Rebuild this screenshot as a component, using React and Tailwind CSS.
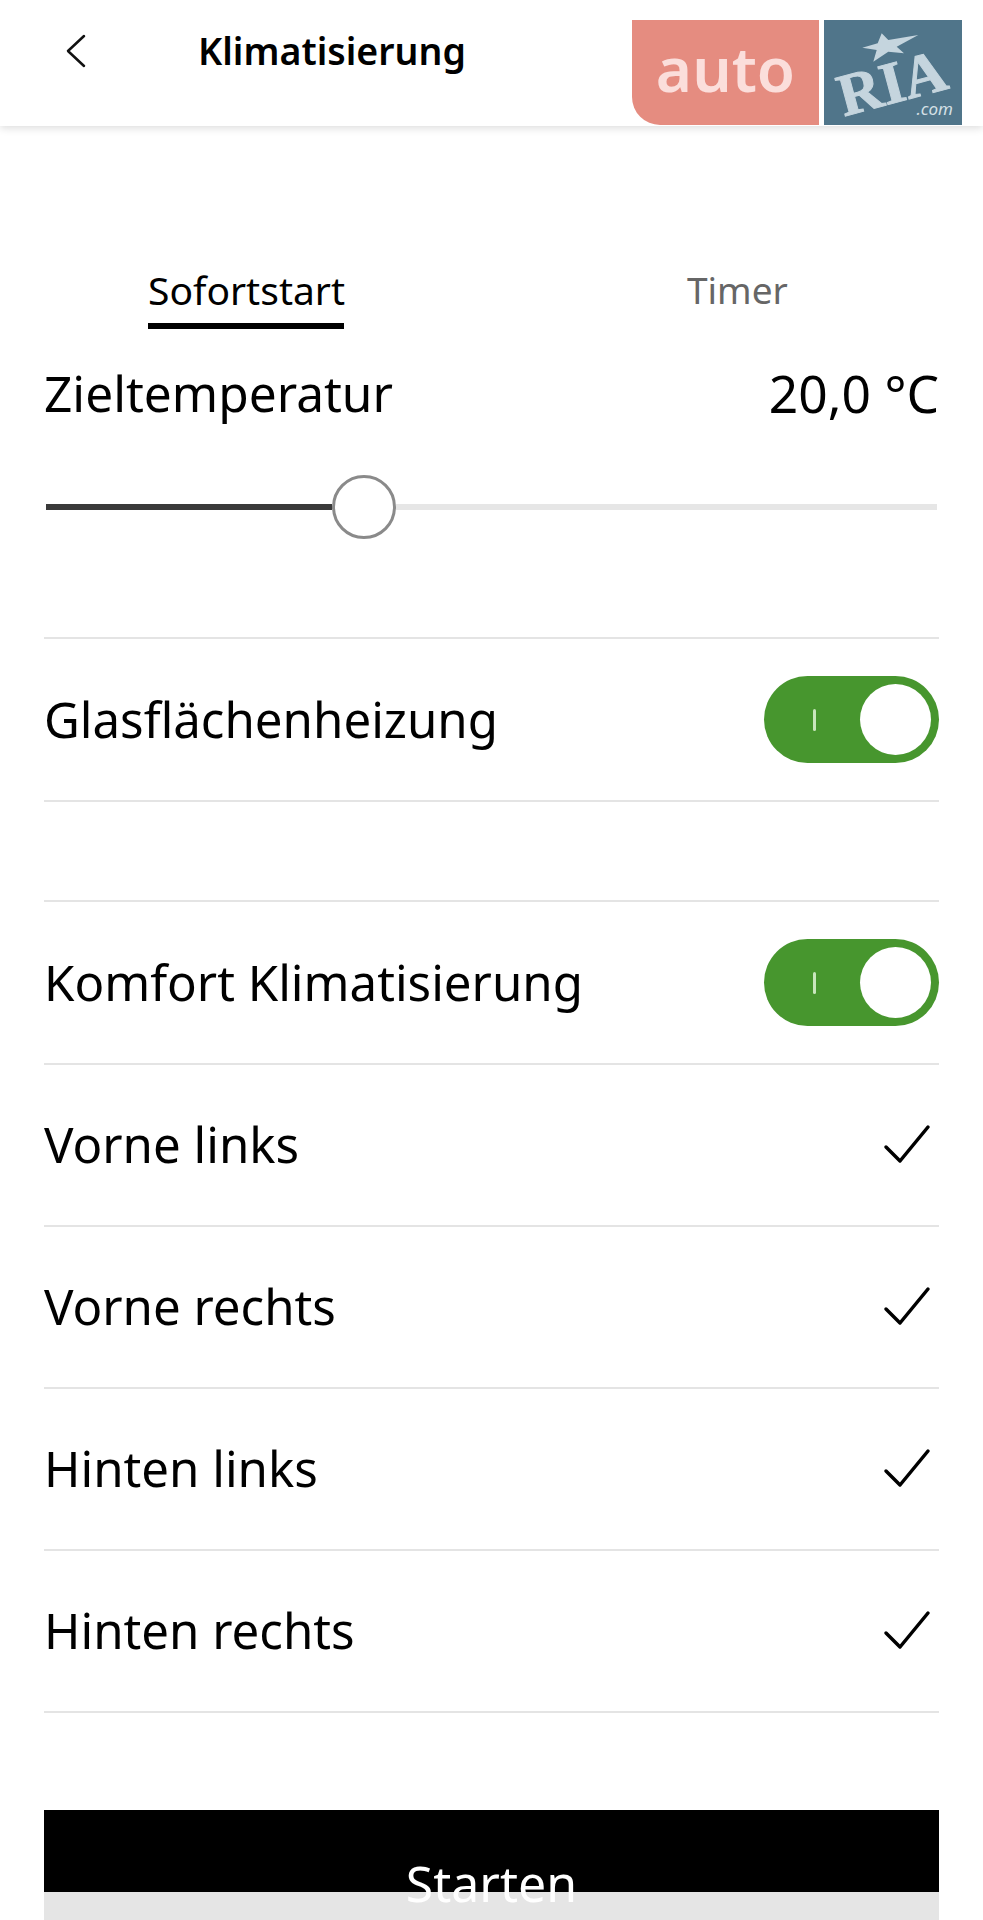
import React from 'react';

const sans = { fontFamily: '"Noto Sans", sans-serif' };

const Divider = () => <div className="h-[2px] bg-[#e4e4e4]"></div>;

const Toggle = () => (
  <div className="w-[175px] h-[87px] rounded-full bg-[#47962e] flex items-center pr-2 shrink-0">
    <div className="flex-1 flex justify-center pl-[5px]">
      <span className="w-[3px] h-[22px] bg-[#c9e6bd] rounded-full"></span>
    </div>
    <span className="w-[71px] h-[71px] rounded-full bg-white"></span>
  </div>
);

const Check = () => (
  <svg width="48" height="42" viewBox="0 0 48 42" fill="none" className="shrink-0">
    <path d="M3 23L17 37L45 3" stroke="#000" strokeWidth="3.5" strokeLinecap="round" strokeLinejoin="round" />
  </svg>
);

const ToggleRow = ({ label }) => (
  <div className="h-[161px] flex items-center justify-between">
    <span className="text-[49.2px] leading-[64px] pb-[2px] text-black">{label}</span>
    <Toggle />
  </div>
);

const CheckRow = ({ label }) => (
  <div>
    <div className="h-[160px] flex items-center justify-between pr-[8px]">
      <span className="text-[49.2px] leading-[64px] pb-[2px] text-black">{label}</span>
      <Check />
    </div>
    <Divider />
  </div>
);

const Logo = () => (
  <div className="absolute left-[632px] top-[20px] flex gap-[5px] h-[105px]">
    <div className="w-[187px] bg-[#e58c80] rounded-bl-[28px] flex items-center justify-center pb-[10px]">
      <span className="text-[62px] font-semibold text-[#fbdedb] leading-none">auto</span>
    </div>
    <div className="relative w-[138px] bg-[#50758a]">
      <svg width="138" height="105" viewBox="0 0 138 105" className="absolute left-0 top-0">
        <path d="M57.7 13.3L64.3 20L94.3 15L72.7 26.7L80 33.3L64.3 31.7L49.3 41.7L52.7 30L38.3 27.7L53.7 23.3Z" fill="#c5d5de" />
      </svg>
      <span
        className="absolute left-[13px] top-[33px] text-[60px] font-bold text-[#c5d5de] leading-none -rotate-[15deg] [-webkit-text-stroke:1px_#c5d5de]"
        style={{ fontFamily: '"Liberation Serif", serif' }}
      >
        RIA
      </span>
      <span className="absolute right-[9px] bottom-[8px] text-[17px] italic text-[#d5e0e6] leading-none">.com</span>
    </div>
  </div>
);

export default function App() {
  return (
    <div className="relative h-[1920px] overflow-hidden bg-white" style={sans}>
      <div className="h-[126px] shadow-[0_2px_8px_rgba(0,0,0,0.14)] flex items-start">
        <svg width="20" height="34" viewBox="0 0 20 34" fill="none" className="ml-[66px] mt-[34px]">
          <path d="M18 2L2 17L18 32" stroke="#111" strokeWidth="2.5" strokeLinecap="round" strokeLinejoin="round" />
        </svg>
        <h1 className="ml-[112px] mt-[27px] text-[37.5px] leading-[48px] font-semibold text-black">Klimatisierung</h1>
      </div>
      <Logo />

      <div className="px-[44px]">
        <div className="flex mt-[136px] h-[67px]">
          <div className="ml-[104px] w-[196px] border-b-[6px] border-black text-center whitespace-nowrap">
            <span className="text-[39px] leading-[56px] text-black">Sofortstart</span>
          </div>
          <span className="ml-[343px] text-[37px] leading-[56px] text-[#666]">Timer</span>
        </div>

        <div className="flex justify-between mt-[30px]">
          <span className="text-[49.6px] leading-[68px] text-black">Zieltemperatur</span>
          <span className="text-[51.5px] leading-[68px] text-black">20,0 °C</span>
        </div>

        <div className="flex items-center h-[64px] mt-[48px] px-[2px]">
          <div className="w-[286px] h-[6px] bg-[#3a3a3a]"></div>
          <div className="w-[64px] h-[64px] rounded-full border-[3px] border-[#8a8a8a] bg-white shrink-0"></div>
          <div className="flex-1 h-[6px] bg-[#e6e6e6]"></div>
        </div>

        <div className="mt-[98px]">
          <Divider />
          <ToggleRow label="Glasflächenheizung" />
          <Divider />
        </div>

        <div className="mt-[98px]">
          <Divider />
          <ToggleRow label="Komfort Klimatisierung" />
          <Divider />
          <CheckRow label="Vorne links" />
          <CheckRow label="Vorne rechts" />
          <CheckRow label="Hinten links" />
          <CheckRow label="Hinten rechts" />
        </div>

        <div className="relative mt-[97px]">
          <div className="h-[82px] bg-black"></div>
          <div className="h-[28px] bg-[#e5e5e5]"></div>
          <span className="absolute left-0 right-0 top-[39px] text-center text-[50px] leading-[68px] text-white">Starten</span>
        </div>
      </div>
    </div>
  );
}
